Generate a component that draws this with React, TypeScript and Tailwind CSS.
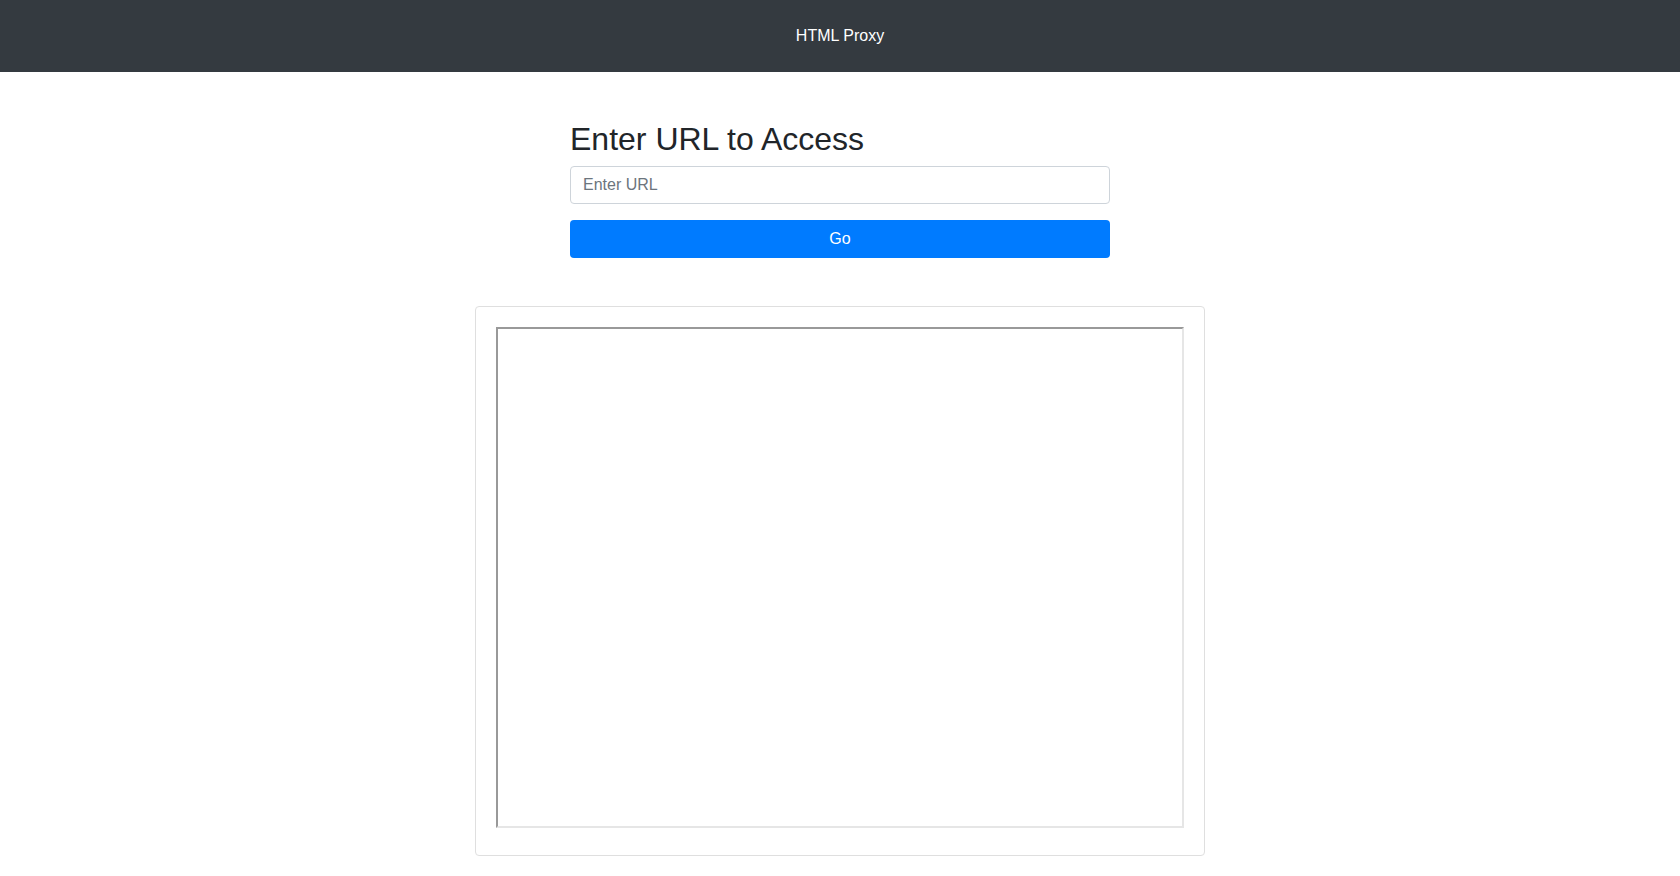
export default function App() {
  return (
    <div className="min-h-screen bg-white font-['Liberation_Sans',Arial,sans-serif] text-[#212529]">
      {/* Navbar */}
      <nav className="h-[72px] bg-[#343a40] flex items-center justify-center">
        <span className="text-white text-base">HTML Proxy</span>
      </nav>

      {/* Form */}
      <div className="w-[540px] mx-auto mt-12">
        <h2 className="text-[32px] leading-[1.2] font-medium mb-2">Enter URL to Access</h2>
        <input
          type="text"
          placeholder="Enter URL"
          className="block w-full h-[38px] px-3 text-base text-[#495057] placeholder:text-[#6c757d] border border-[#ced4da] rounded outline-none mb-4"
        />
        <button className="block w-full h-[38px] bg-[#007bff] text-white text-base rounded">Go</button>
      </div>

      {/* Frame card */}
      <div className="w-[730px] mx-auto mt-12 border border-[#dfdfdf] rounded px-5 pt-5 pb-[27px]">
        <div className="h-[501px] border-2 border-t-[#999999] border-l-[#999999] border-b-[#e6e6e6] border-r-[#e6e6e6] bg-white" />
      </div>
    </div>
  );
}
